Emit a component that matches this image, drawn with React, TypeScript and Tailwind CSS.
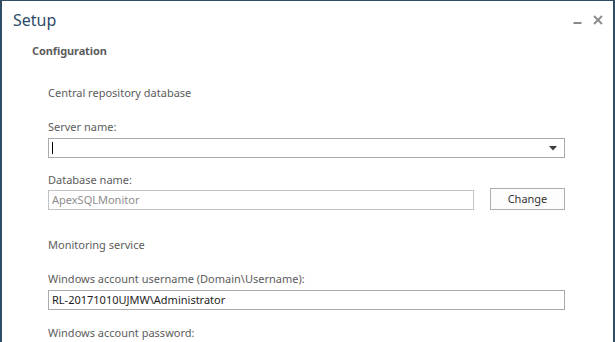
export default function App() {
  return (
    <div
      className="w-[615px] h-[342px] overflow-hidden bg-white border-t border-l-2 border-r-2 border-[#2f4e66] text-[11px] text-[#5c5c5c]"
      style={{ fontFamily: '"Noto Sans", "Segoe UI", sans-serif' }}
    >
      {/* Title bar */}
      <div className="h-[38px] flex items-center justify-between pl-[11px] pr-[10px]">
        <span className="text-[16px] leading-[20px] text-[#2c4a66]">Setup</span>
        <div className="flex items-center gap-[11px]">
          <svg width="9" height="10" viewBox="0 0 9 10">
            <rect x="0.5" y="7" width="8" height="2" fill="#8a8a8a" />
          </svg>
          <svg width="10" height="10" viewBox="0 0 10 10">
            <path d="M1 1 L9 9 M9 1 L1 9" stroke="#8a8a8a" strokeWidth="1.8" />
          </svg>
        </div>
      </div>

      {/* Section header */}
      <div className="mt-[5px] pl-[30px] leading-[14px] font-bold tracking-[-0.1px]">Configuration</div>

      <div className="pl-[46px] flex flex-col">
        <div className="mt-[28px] leading-[14px]">Central repository database</div>

        <div className="mt-[20px] leading-[14px]">Server name:</div>
        <div className="mt-[4px] w-[517px] h-[20px] border border-[#ababab] bg-white flex items-center justify-between pl-[3px] pr-[7px]">
          <span className="w-px h-[12px] bg-black" />
          <svg width="8" height="5" viewBox="0 0 8 5">
            <path d="M0 0 L8 0 L4 4.5 Z" fill="#3c3c3c" />
          </svg>
        </div>

        <div className="mt-[15px] leading-[14px]">Database name:</div>
        <div className="mt-px flex items-end gap-[16px]">
          <div className="w-[426px] h-[20px] border border-[#c2c2c2] bg-white flex items-center pl-[3px] text-[#8c8c8c] leading-[14px]">
            ApexSQLMonitor
          </div>
          <button className="w-[75px] h-[22px] border border-[#adadad] bg-[#fdfdfd] text-[#333333] flex items-center justify-center leading-[14px]">
            Change
          </button>
        </div>

        <div className="mt-[28px] leading-[14px]">Monitoring service</div>

        <div className="mt-[20px] leading-[14px]">Windows account username (Domain\Username):</div>
        <div className="mt-[4px] w-[517px] h-[20px] border border-[#ababab] bg-white flex items-center pl-[3px] text-[#1e1e1e] leading-[14px]">
          RL-20171010UJMW\Administrator
        </div>

        <div className="mt-[16px] leading-[14px]">Windows account password:</div>
      </div>
    </div>
  );
}
